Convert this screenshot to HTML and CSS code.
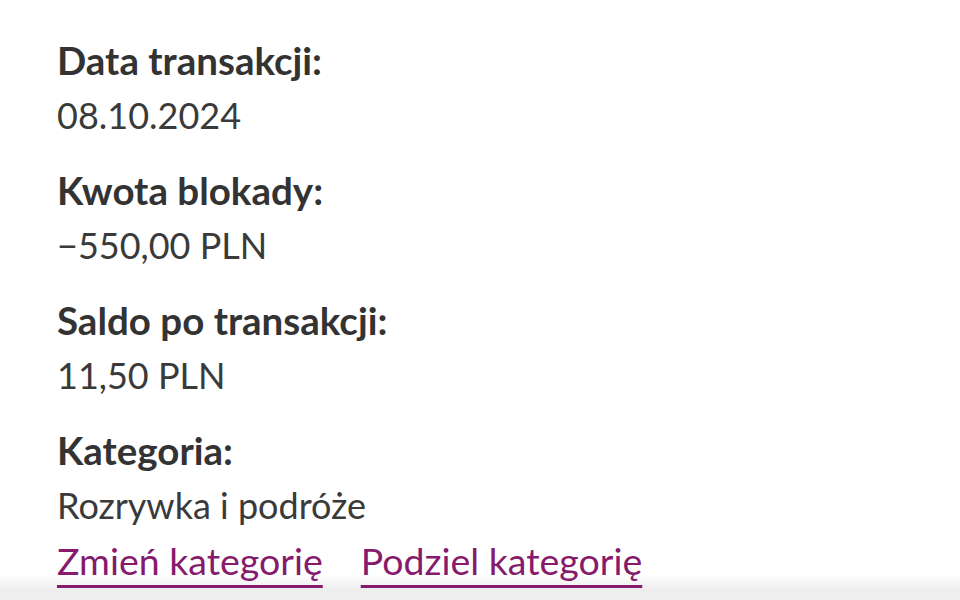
FILE: index.html
```html
<!DOCTYPE html>
<html lang="pl">
<head>
<meta charset="utf-8">
<title>Szczegóły transakcji</title>
<link rel="stylesheet" href="styles.css">
</head>
<body>
<main class="details">
  <div class="field field-cut">
    <div class="value">Blokada na karcie</div>
  </div>
  <div class="field">
    <div class="label">Data transakcji:</div>
    <div class="value">08.10.2024</div>
  </div>
  <div class="field">
    <div class="label">Kwota blokady:</div>
    <div class="value">&minus;550,00 PLN</div>
  </div>
  <div class="field">
    <div class="label">Saldo po transakcji:</div>
    <div class="value">11,50 PLN</div>
  </div>
  <div class="field">
    <div class="label">Kategoria:</div>
    <div class="value">Rozrywka i podróże</div>
    <div class="links">
      <a class="link" href="#">Zmień kategorię</a>
      <a class="link" href="#">Podziel kategorię</a>
    </div>
  </div>
</main>
<div class="bottom-shade"></div>
</body>
</html>
```
FILE: styles.css
```css
html, body {
  margin: 0;
  padding: 0;
  background: #ffffff;
}
body {
  width: 960px;
  height: 600px;
  overflow: hidden;
  font-family: Lato, "Open Sans", "DejaVu Sans", sans-serif;
  color: #333333;
}
.details {
  display: flex;
  flex-direction: column;
  gap: 20px;
  padding: 0 0 0 57px;
  margin-top: -42px;
}
.field {
  display: flex;
  flex-direction: column;
}
.label {
  font-size: 38.5px;
  line-height: 55px;
  font-weight: 700;
}
.value {
  font-size: 36px;
  line-height: 55px;
  font-weight: 400;
  color: #3a3a3a;
}
.field-cut .value {
  color: #e2e2e2;
}
.links {
  position: relative;
  z-index: 2;
  display: flex;
  gap: 38px;
}
.link {
  font-size: 37.5px;
  line-height: 55px;
  font-weight: 400;
  color: #861a6c;
  text-decoration: underline;
  text-decoration-color: #861a6c;
  text-decoration-thickness: 3px;
  text-underline-offset: 10px;
  text-decoration-skip-ink: none;
}
.bottom-shade {
  position: absolute;
  left: 0;
  top: 574px;
  width: 960px;
  height: 26px;
  z-index: 1;
  background: linear-gradient(rgba(238,238,238,0), #ededed 60%, #efefef);
}
```
